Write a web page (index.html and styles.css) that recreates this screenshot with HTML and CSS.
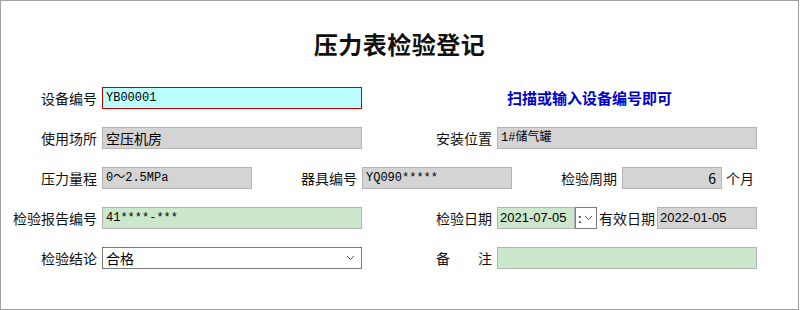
FILE: index.html
```html
<!DOCTYPE html>
<html lang="zh-CN">
<head>
<meta charset="utf-8">
<title>压力表检验登记</title>
<link rel="stylesheet" href="styles.css">
</head>
<body>
<div class="frame">
  <h1 class="title">压力表检验登记</h1>
  <div class="rows">
    <div class="row">
      <label class="lbl w96">设备编号</label>
      <div class="box w260 scan mono">YB00001</div>
      <div class="hint">扫描或输入设备编号即可</div>
    </div>
    <div class="row">
      <label class="lbl w96">使用场所</label>
      <div class="box w260 gray">空压机房</div>
      <label class="lbl w130">安装位置</label>
      <div class="box w260 gray mono">1#储气罐</div>
    </div>
    <div class="row">
      <label class="lbl w96">压力量程</label>
      <div class="box w150 gray mono">0～2.5MPa</div>
      <label class="lbl w105">器具编号</label>
      <div class="box w150 gray mono">YQ090*****</div>
      <label class="lbl w105">检验周期</label>
      <div class="box w100 gray right">6</div>
      <span class="unit">个月</span>
    </div>
    <div class="row">
      <label class="lbl w96">检验报告编号</label>
      <div class="box w260 green mono">41****-***</div>
      <label class="lbl w130">检验日期</label>
      <div class="box w78 green date">2021-07-05</div>
      <div class="dbtn"><span class="colon">:</span><svg width="9" height="6" viewBox="0 0 9 6"><path d="M1 1 L4.5 4.5 L8 1" fill="none" stroke="#555" stroke-width="1"/></svg></div>
      <label class="lbl2">有效日期</label>
      <div class="box w100 gray date">2022-01-05</div>
    </div>
    <div class="row">
      <label class="lbl w96">检验结论</label>
      <div class="box w260 select"><span>合格</span><svg width="9" height="6" viewBox="0 0 9 6"><path d="M1 1 L4.5 4.5 L8 1" fill="none" stroke="#555" stroke-width="1"/></svg></div>
      <label class="lbl w130">备　　注</label>
      <div class="box w260 green"></div>
    </div>
  </div>
</div>
</body>
</html>
```
FILE: styles.css
```css
* { box-sizing: border-box; }
html, body { margin: 0; padding: 0; background: #fff; }
body { font-family: "Noto Sans CJK SC", "Liberation Sans", sans-serif; color: #000; }

.frame {
  width: 799px;
  height: 310px;
  border: 1px solid #a0a0a0;
}

.title {
  margin: 31px 0 0 0;
  height: 24px;
  line-height: 24px;
  font-size: 24px;
  font-weight: bold;
  text-align: center;
  letter-spacing: 0.5px;
  color: #111;
}

.rows {
  margin-top: 31px;
  display: flex;
  flex-direction: column;
  gap: 18px;
}

.row {
  display: flex;
  align-items: center;
  height: 22px;
}

.lbl {
  font-size: 14px;
  line-height: 22px;
  text-align: right;
  padding-right: 5px;
  white-space: nowrap;
  color: #111;
}
.w96 { width: 101px; }
.w130 { width: 135px; }
.w105 { width: 110px; }

.lbl2 {
  font-size: 14px;
  line-height: 22px;
  margin-left: 2px;
  width: 58px;
  white-space: nowrap;
  color: #111;
}

.box {
  height: 22px;
  border: 1px solid #b4b4b4;
  font-size: 14px;
  line-height: 20px;
  padding: 0 3px;
  white-space: nowrap;
  overflow: hidden;
}
.w260 { width: 260px; }
.w150 { width: 150px; }
.w100 { width: 100px; }
.w78 { width: 78px; }

.gray { background: #d4d4d4; }
.green { background: #cce8cc; }
.scan { background: #bbffff; border-color: #c00000; }
.right { text-align: right; padding-right: 5px; }

.mono { font-family: "Liberation Mono", "Noto Sans CJK SC", monospace; font-size: 12px; }
.date { font-family: "Liberation Sans", sans-serif; font-size: 13px; padding: 0 2px; }

.hint {
  margin-left: 145px;
  font-size: 15px;
  font-weight: bold;
  color: #0000cc;
  line-height: 22px;
}

.unit {
  font-size: 14px;
  margin-left: 4px;
  color: #111;
}

.dbtn {
  width: 22px;
  height: 22px;
  border: 1px solid #7a7a7a;
  background: #fff;
  display: flex;
  align-items: center;
  padding-left: 2px;
  gap: 2px;
  font-size: 13px;
}
.colon { line-height: 20px; }

.select {
  background: #fff;
  border-color: #7a7a7a;
  display: flex;
  align-items: center;
  justify-content: space-between;
  padding-right: 6px;
}
```
